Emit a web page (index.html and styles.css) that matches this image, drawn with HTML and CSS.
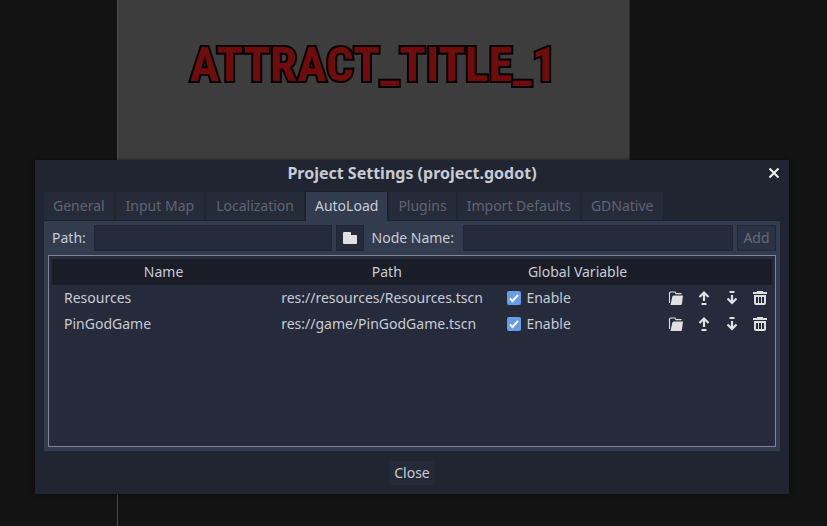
FILE: index.html
```html
<!DOCTYPE html>
<html lang="en">
<head>
<meta charset="utf-8">
<title>Project Settings (project.godot)</title>
<link rel="stylesheet" href="styles.css">
</head>
<body>
<svg class="sprites" aria-hidden="true">
  <symbol id="open" viewBox="0 0 16 16"><path d="M13 4V3.600H8L7 2H2.500a1 1 0 0 0-1 1V13" fill="none" stroke="currentColor" stroke-width="1.100"/><path d="M5.500 5.500H15l-1 8a1.500 1.500 0 0 1-1.500 1.500H2.500L4.300 6.500z"/></symbol>
  <symbol id="up" viewBox="0 0 16 16"><path d="M8 2.500V11M3.500 7 8 2.500 12.500 7" fill="none" stroke="currentColor" stroke-width="2.200"/><path d="M5.500 13h5v2h-5z"/></symbol>
  <symbol id="down" viewBox="0 0 16 16"><path d="M8 5v8M3.500 8.500 8 13l4.500-4.500" fill="none" stroke="currentColor" stroke-width="2.200"/><path d="M5.500 1h5v2h-5z"/></symbol>
  <symbol id="trash" viewBox="0 0 16 16"><path fill-rule="evenodd" d="M5 1v1H1v2h14V2h-4V1zM2 5v8a2 2 0 0 0 2 2h8a2 2 0 0 0 2-2V5zM4 7h2v6H4zM7 7h2v6H7zM10 7h2v6h-2z"/></symbol>
</svg>
<main class="workspace">
  <div class="canvas"><h1 class="attract">ATTRACT_TITLE_1</h1></div>
</main>
<section class="dialog" role="dialog" aria-labelledby="dialog-title">
  <header class="titlebar">
    <h2 id="dialog-title">Project Settings (project.godot)</h2>
    <button class="dismiss" aria-label="Close window"><svg viewBox="0 0 12 12"><path d="M1.500 1.500 10.500 10.500M10.500 1.500 1.500 10.500"/></svg></button>
  </header>
  <div class="tabs" role="tablist">
    <button role="tab">General</button>
    <button role="tab">Input Map</button>
    <button role="tab">Localization</button>
    <button role="tab" aria-selected="true">AutoLoad</button>
    <button role="tab">Plugins</button>
    <button role="tab">Import Defaults</button>
    <button role="tab">GDNative</button>
  </div>
  <div class="panel" role="tabpanel">
    <form class="toolbar">
      <label for="path">Path:</label>
      <input class="field path" id="path" type="text">
      <button class="browse" type="button" aria-label="Browse"><svg viewBox="0 0 16 16"><path d="M2 2h6a1 1 0 0 1 1 1v2h5a1 1 0 0 1 1 1v7a1 1 0 0 1-1 1H2a1 1 0 0 1-1-1V3a1 1 0 0 1 1-1z"/></svg></button>
      <label class="node-label" for="node">Node Name:</label>
      <input class="field node" id="node" type="text">
      <button class="add" type="button" disabled>Add</button>
    </form>
    <div class="tree">
      <table>
        <colgroup><col class="c-name"><col class="c-path"><col class="c-global"><col class="c-tools"></colgroup>
        <thead><tr><th>Name</th><th>Path</th><th>Global Variable</th><th></th></tr></thead>
        <tbody>
          <tr>
            <td>Resources</td><td class="res">res://resources/Resources.tscn</td>
            <td class="global"><label><input type="checkbox" checked>Enable</label></td>
            <td><div class="tools">
              <button aria-label="Open"><svg><use href="#open"/></svg></button>
              <button aria-label="Move up"><svg><use href="#up"/></svg></button>
              <button aria-label="Move down"><svg><use href="#down"/></svg></button>
              <button aria-label="Remove"><svg><use href="#trash"/></svg></button>
            </div></td>
          </tr>
          <tr>
            <td>PinGodGame</td><td class="res">res://game/PinGodGame.tscn</td>
            <td class="global"><label><input type="checkbox" checked>Enable</label></td>
            <td><div class="tools">
              <button aria-label="Open"><svg><use href="#open"/></svg></button>
              <button aria-label="Move up"><svg><use href="#up"/></svg></button>
              <button aria-label="Move down"><svg><use href="#down"/></svg></button>
              <button aria-label="Remove"><svg><use href="#trash"/></svg></button>
            </div></td>
          </tr>
        </tbody>
      </table>
    </div>
  </div>
  <footer class="actions"><button class="close">Close</button></footer>
</section>
</body>
</html>
```
FILE: styles.css
```css
* { box-sizing: border-box; }
body {
  margin: 0;
  background: #131313;
  color: #c8cbd4;
  font: 14px/20px "Noto Sans", sans-serif;
}
button, input {
  margin: 0;
  padding: 0;
  border: 0;
  background: none;
  color: inherit;
  font: inherit;
}
svg { display: block; fill: currentColor; }
.sprites { position: absolute; width: 0; height: 0; }

.workspace {
  height: 100vh;
  padding: 0 197px 0 117px;
  overflow: hidden;
}
.canvas {
  height: 100%;
  background:
    linear-gradient(#465046, #465046) 0 0 / 1px 300px no-repeat,
    linear-gradient(#2b2b38, #2b2b38) 100% 0 / 1px 300px no-repeat,
    linear-gradient(#3d3d3d, #3d3d3d) 0 0 / 100% 300px no-repeat,
    linear-gradient(#43560f, #43560f) 0 0 / 1px 100% no-repeat;
}
.attract {
  margin: 0;
  padding-top: 30px;
  color: #700c0c;
  font: bold 49px/70px "Roboto Condensed", "Open Sans Condensed", "Liberation Sans", sans-serif;
  text-align: center;
  white-space: nowrap;
  -webkit-text-stroke: 4px #050202;
  paint-order: stroke fill;
}

.dialog {
  position: absolute;
  inset: 160px 38px 32px 35px;
  display: flex;
  flex-direction: column;
  padding: 0 9px 9px;
  background: #212531;
  box-shadow: 0 0 4px #0008;
}
.titlebar {
  display: grid;
  grid-template-columns: 1fr auto 1fr;
  align-items: center;
  height: 26px;
  margin-bottom: 6px;
}
.titlebar h2 { grid-column: 2; margin: 0; font-size: 16px; line-height: 26px; }
.dismiss { justify-self: end; color: #f0f0f0; }
.dismiss svg { width: 12px; height: 12px; fill: none; stroke: currentColor; stroke-width: 2; }

.tabs { display: flex; gap: 2px; height: 29px; border-bottom: 1px solid #1b202d; }
.tabs button { padding: 0 10px; background: #252b39; color: #606571; }
.tabs button:first-child,
.tabs button[aria-selected],
.tabs button[aria-selected] ~ button { padding: 0 9px; }
.tabs button[aria-selected] {
  height: 29px;
  padding-bottom: 1px;
  background: #333b4f;
  box-shadow: 0 -1px #1b202d, 1px 0 #1b202d, -1px 0 #1b202d;
  color: #c8cbd4;
}

.panel {
  display: flex;
  flex: 1;
  flex-direction: column;
  gap: 4px;
  padding: 4px;
  background: #333b4f;
}
.toolbar { display: flex; align-items: center; gap: 4px; height: 26px; margin: 0; }
.toolbar label { padding: 0 4px; }
.field, .browse, .add { height: 26px; border: 1px solid #202634; background: #252b3b; }
.field { flex: 236 1 0; min-width: 0; padding: 0 6px; }
.field.node { flex-grow: 270; }
.browse { display: grid; place-items: center; width: 28px; color: #e0e0e0; }
.browse svg { width: 16px; height: 16px; }
.toolbar .node-label { padding-right: 5px; }
.add { width: 39px; background: #2b3243; color: #646a78; }

.tree { flex: 1; padding: 3px; border: 1px solid #7e8597; background: #252b3b; }
table { width: 100%; border-collapse: collapse; table-layout: fixed; }
.c-name { width: 31%; }
.c-path { width: 31%; }
.c-global { width: 22%; }
.c-tools { width: 16%; }
th, td { height: 26px; padding: 0; font-weight: 400; text-align: left; white-space: nowrap; }
th { background: #1a1d28; text-align: center; }
td:first-child { padding-left: 12px; }
.res { padding-left: 6px; }
.global { padding-left: 9px; }
.global label { display: flex; align-items: center; gap: 5px; }
.global input {
  appearance: none;
  width: 14px;
  height: 14px;
  border-radius: 2px;
  background: #699ce8 url("data:image/svg+xml,%3Csvg xmlns='http://www.w3.org/2000/svg' viewBox='0 0 14 14'%3E%3Cpath d='M3 7.500 5.500 10 11 4' fill='none' stroke='white' stroke-width='2'/%3E%3C/svg%3E");
}
.tools { display: flex; justify-content: flex-end; gap: 4px; }
.tools button { display: grid; place-items: center; width: 24px; height: 24px; color: #e0e0e0; }
.tools svg { width: 16px; height: 16px; }

.actions { display: flex; justify-content: center; padding-top: 10px; }
.close { height: 24px; padding: 0 5px; background: #252a38; }
```
